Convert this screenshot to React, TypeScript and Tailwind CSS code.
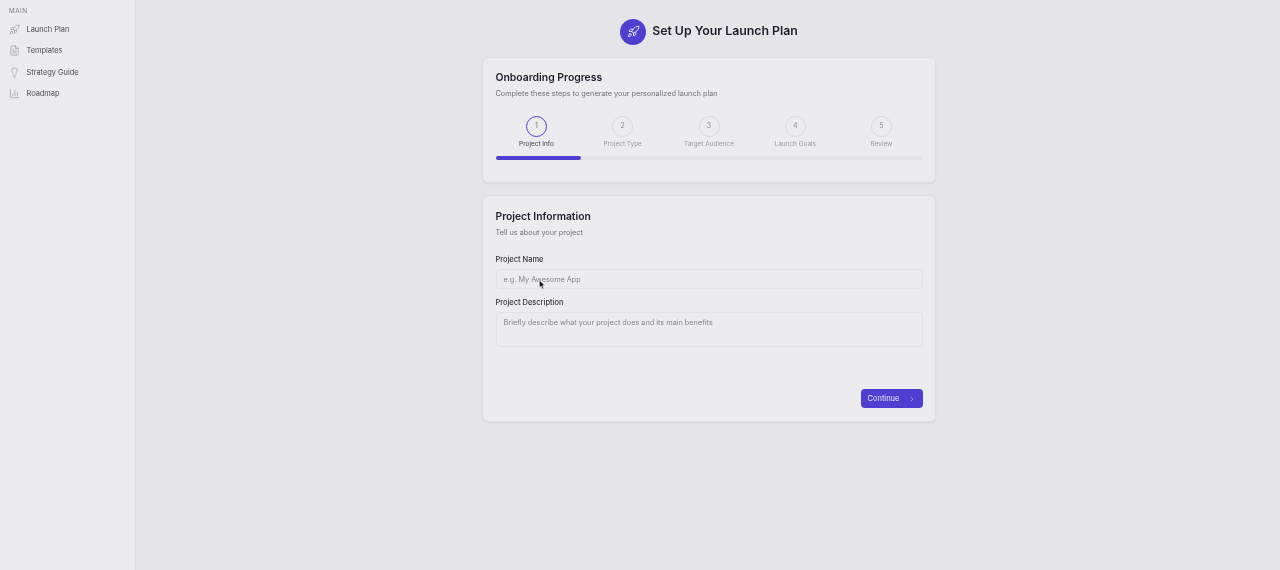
import { Rocket, FileText, Lightbulb, BarChart3, ChevronRight } from "lucide-react";

const nav = [
  { label: "Launch Plan", Icon: Rocket },
  { label: "Templates", Icon: FileText },
  { label: "Strategy Guide", Icon: Lightbulb },
  { label: "Roadmap", Icon: BarChart3 },
];
const steps = ["Project Info", "Project Type", "Target Audience", "Launch Goals", "Review"];

export default function App() {
  return (
    <div className="flex h-[570px] w-[1280px] overflow-hidden bg-[#e4e4e9] text-[#1c1c28] blur-[0.3px] [font-family:Inter,sans-serif]">
      <aside className="w-[136px] shrink-0 border-r border-[#dedee2] bg-[#ececee] px-[9px] pt-[7px]">
        <div className="text-[6.3px] leading-[8px] tracking-[0.08em] text-[#7d7d85]">MAIN</div>
        <nav className="mt-[4px] flex flex-col">
          {nav.map(({ label, Icon }) => (
            <div key={label} className="flex h-[21.33px] items-center gap-[6.5px]">
              <Icon className="h-[11px] w-[11px] text-[#85858c]" strokeWidth={1.2} />
              <span className="text-[7.4px] text-[#4b4b55]">{label}</span>
            </div>
          ))}
        </nav>
      </aside>
      <main className="flex flex-1 flex-col items-center pl-[2px] pt-[18px]">
        <header className="flex h-[27px] items-center gap-[6px]">
          <div className="flex h-[26px] w-[26px] items-center justify-center rounded-full bg-[#4f3fd0]">
            <Rocket className="h-[13px] w-[13px] text-white" strokeWidth={1.5} />
          </div>
          <h1 className="text-[12.3px] font-semibold leading-none text-[#1f1f2b]">Set Up Your Launch Plan</h1>
        </header>

        <section className="mt-[12px] h-[126px] w-[454px] rounded-[6px] border border-[#dfdfe3] bg-[#ececee] px-[12.5px] pt-[13px] shadow-[0_1px_2px_rgba(0,0,0,0.06)]">
          <h2 className="text-[10.4px] font-semibold leading-[13px] text-[#1f1f2f]">Onboarding Progress</h2>
          <p className="mt-[4px] text-[7.3px] leading-[11px] text-[#70707a]">Complete these steps to generate your personalized launch plan</p>
          <div className="mt-[17px] flex justify-between">
            {steps.map((s, i) => (
              <div key={s} className="flex w-[82px] flex-col items-center">
                <div
                  className={
                    i === 0
                      ? "flex h-[21px] w-[21px] items-center justify-center rounded-full border border-[#4f3fd0] text-[7px] text-[#77777f]"
                      : "flex h-[21px] w-[21px] items-center justify-center rounded-full border border-[#d9d9dd] text-[7px] text-[#8c8c94]"
                  }
                >
                  {i + 1}
                </div>
                <div className={i === 0 ? "mt-[2px] whitespace-nowrap text-[6.45px] leading-[10px] text-[#3c3c46]" : "mt-[2px] whitespace-nowrap text-[6.45px] leading-[10px] text-[#9a9aa1]"}>{s}</div>
              </div>
            ))}
          </div>
          <div className="mt-[7px] h-[4px] w-full rounded-full bg-[#e3e3e6]">
            <div className="h-full w-[20%] rounded-full bg-[#4f3fd0]" />
          </div>
        </section>

        <section className="mt-[12px] flex h-[227px] w-[454px] flex-col rounded-[6px] border border-[#dfdfe3] bg-[#ececee] px-[12.5px] pt-[14px] shadow-[0_1px_2px_rgba(0,0,0,0.06)]">
          <h2 className="text-[10.3px] font-semibold leading-[13px] text-[#1f1f2f]">Project Information</h2>
          <p className="mt-[4px] text-[7.3px] leading-[11px] text-[#70707a]">Tell us about your project</p>
          <label className="mt-[16px] text-[7.45px] font-medium leading-[11px] text-[#35353f]">Project Name</label>
          <div className="mt-[4px] flex h-[20px] items-center rounded-[4px] border border-[#e2e2e5] px-[7px] pt-[3px] text-[7.3px] text-[#85858c]">e.g. My Awesome App</div>
          <label className="mt-[7.5px] text-[7.45px] font-medium leading-[11px] text-[#35353f]">Project Description</label>
          <div className="mt-[4px] h-[35px] rounded-[4px] border border-[#e2e2e5] px-[7px] pt-[4px] text-[7.3px] leading-[11px] text-[#85858c]">Briefly describe what your project does and its main benefits</div>
          <div className="mt-[42px] flex justify-end">
            <button className="flex h-[19px] w-[62px] items-center justify-between rounded-[4px] bg-[#4f3fd0] pl-[7px] pr-[7px] pt-[2px] text-[7.5px] text-[#e6e4fa]">
              Continue
              <ChevronRight className="h-[8px] w-[8px]" strokeWidth={1.5} />
            </button>
          </div>
        </section>
      </main>
      <svg className="absolute left-[539px] top-[280px]" width="7" height="10" viewBox="0 0 7 10">
        <path d="M0.5 0.5 L0.5 7.5 L2.2 6 L3.4 9 L4.6 8.5 L3.4 5.6 L5.8 5.5 Z" fill="#111" stroke="#fff" strokeWidth="0.4" />
      </svg>
    </div>
  );
}
